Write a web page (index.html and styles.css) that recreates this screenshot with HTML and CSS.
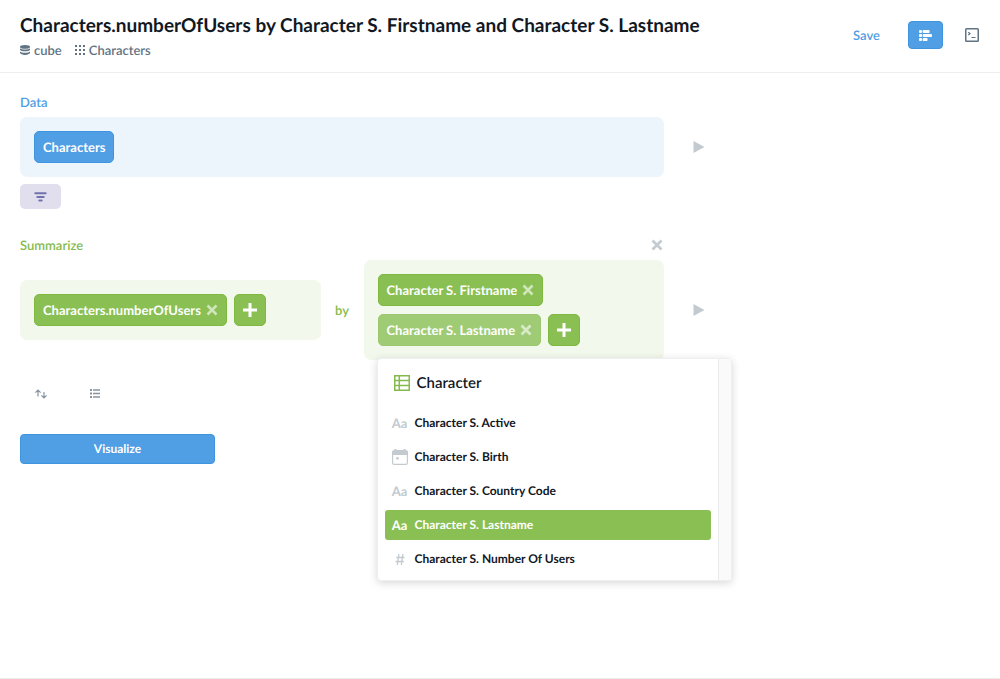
FILE: index.html
```html
<!DOCTYPE html>
<html lang="en">
<head>
<meta charset="utf-8">
<title>Characters.numberOfUsers</title>
<link rel="stylesheet" href="styles.css">
</head>
<body>
<svg class="sprite" aria-hidden="true">
  <symbol id="close" viewBox="0 0 12 12"><path d="M1.5 1.5l9 9M10.5 1.5l-9 9" stroke="currentColor" stroke-width="2.6" fill="none"/></symbol>
  <symbol id="plus" viewBox="0 0 14 14"><path d="M7 0v14M0 7h14" stroke="currentColor" stroke-width="3" fill="none"/></symbol>
  <symbol id="play" viewBox="0 0 12 12"><path d="M.5 0v12L11.5 6z" fill="currentColor"/></symbol>
</svg>
<header class="header">
  <div class="heading">
    <h1 class="title">Characters.numberOfUsers by Character S. Firstname and Character S. Lastname</h1>
    <nav class="crumbs">
      <a class="crumb" href="#cube">
        <svg width="10" height="10" viewBox="0 0 10 10" fill="currentColor"><ellipse cx="5" cy="1.9" rx="5" ry="1.8"/><path d="M0 3.2c1 1.7 9 1.7 10 0v1.6c-1 2-9 2-10 0z"/><path d="M0 6.4c1 1.9 9 1.9 10 0v1.7c-1 2.4-9 2.4-10 0z"/></svg>
        <span>cube</span>
      </a>
      <a class="crumb" href="#characters">
        <svg width="10" height="10" viewBox="0 0 10 10" fill="currentColor"><path d="M0 0h2v2H0zM4 0h2v2H4zM8 0h2v2H8zM0 4h2v2H0zM4 4h2v2H4zM8 4h2v2H8zM0 8h2v2H0zM4 8h2v2H4zM8 8h2v2H8z"/></svg>
        <span>Characters</span>
      </a>
    </nav>
  </div>
  <div class="actions">
    <button class="save" type="button">Save</button>
    <button class="mode mode-active" type="button" aria-label="Notebook editor">
      <svg width="13" height="11" viewBox="0 0 13 11" fill="currentColor"><rect width="3" height="3" rx="1"/><rect y="4" width="3" height="3" rx="1"/><rect y="8" width="3" height="3" rx="1"/><rect x="3.6" width="7" height="3" rx="1"/><rect x="3.6" y="4" width="9.4" height="3" rx="1"/><rect x="3.6" y="8" width="5" height="3" rx="1"/></svg>
    </button>
    <button class="mode" type="button" aria-label="View SQL">
      <svg width="14" height="14" viewBox="0 0 14 14" fill="none" stroke="currentColor"><rect x=".75" y=".75" width="12.5" height="12.5" rx=".8" stroke-width="1.5"/><path d="M3.3 4.2L5 5.6 3.3 7M6.5 9.5h4" stroke-width="1.2"/></svg>
    </button>
  </div>
</header>
<main class="notebook">
  <section class="step">
    <h2 class="label blue">Data</h2>
    <div class="line">
      <div class="cell cell-blue"><button class="chip chip-blue" type="button">Characters</button></div>
      <button class="play" type="button" aria-label="Preview data"><svg width="12" height="12"><use href="#play"/></svg></button>
    </div>
    <button class="filter" type="button" aria-label="Filter">
      <svg width="13" height="10" viewBox="0 0 13 10" fill="none" stroke="currentColor" stroke-width="2" stroke-linecap="round"><path d="M1.3 1.2h10.4M3.3 5h6.4M5.3 8.6h2.4" /></svg>
    </button>
  </section>
  <section class="step">
    <div class="step-head">
      <h2 class="label green">Summarize</h2>
      <button class="remove-step" type="button" aria-label="Remove step"><svg width="12" height="12"><use href="#close"/></svg></button>
    </div>
    <div class="line">
      <div class="summary">
        <div class="cell cell-green">
          <button class="chip" type="button">Characters.numberOfUsers <svg class="x" width="12" height="12"><use href="#close"/></svg></button>
          <button class="chip add" type="button" aria-label="Add metric"><svg width="14" height="14"><use href="#plus"/></svg></button>
        </div>
        <span class="by green">by</span>
        <div class="group">
          <div class="cell cell-green">
            <button class="chip" type="button">Character S. Firstname <svg class="x" width="12" height="12"><use href="#close"/></svg></button>
            <button class="chip chip-open" type="button">Character S. Lastname <svg class="x" width="12" height="12"><use href="#close"/></svg></button>
            <button class="chip add" type="button" aria-label="Add grouping"><svg width="14" height="14"><use href="#plus"/></svg></button>
          </div>
          <div class="menu">
            <div class="menu-main">
              <h3 class="menu-title">
                <svg width="16" height="16" viewBox="0 0 16 16" fill="none" stroke="#84bb4c" stroke-width="1.5"><path d="M.75.75h14.5v14.5H.75zM5.3.7v14.6M.7 5.5h14.6M.7 10.4h14.6"/></svg>
                Character
              </h3>
              <ul class="options">
                <li><button class="option" type="button"><span class="kind">Aa</span>Character S. Active</button></li>
                <li><button class="option" type="button"><span class="kind"><svg width="16" height="16" viewBox="0 0 16 16"><path d="M3.4 0v2M12.6 0v2" stroke="currentColor" stroke-width="2"/><rect x=".6" y="1.6" width="14.8" height="13.8" rx="1.6" fill="none" stroke="currentColor" stroke-width="1.2"/><path d="M.6 2h14.8v4H.6z" fill="currentColor"/><circle cx="5.5" cy="9.3" r="1.4" fill="currentColor"/></svg></span>Character S. Birth</button></li>
                <li><button class="option" type="button"><span class="kind">Aa</span>Character S. Country Code</button></li>
                <li><button class="option option-selected" type="button"><span class="kind">Aa</span>Character S. Lastname</button></li>
                <li><button class="option" type="button"><span class="kind"><svg width="10" height="11" viewBox="0 0 10 11" fill="none" stroke="currentColor" stroke-width="1.3"><path d="M3.9.2L2.3 10.8M7.9.2L6.3 10.8M1.3 3.5h8.2M.6 7.5h8.2"/></svg></span>Character S. Number Of Users</button></li>
              </ul>
            </div>
            <div class="menu-rail"></div>
          </div>
        </div>
      </div>
      <button class="play" type="button" aria-label="Preview summary"><svg width="12" height="12"><use href="#play"/></svg></button>
    </div>
  </section>
  <div class="extras">
    <button class="extra" type="button" aria-label="Sort"><svg width="12" height="10" viewBox="0 0 12 10" fill="none" stroke="currentColor" stroke-width="1.2"><path d="M3 7.5V1M.4 3.6L3 1l2.6 2.6M9 3v6M6.4 6.4L9 9l2.6-2.6"/></svg></button>
    <button class="extra" type="button" aria-label="Row limit"><svg width="10" height="9" viewBox="0 0 10 9" fill="currentColor"><path d="M0 0h2v2H0zM3 .3h7v1.4H3zM0 3.5h2v2H0zM3 3.8h7v1.4H3zM0 7h2v2H0zM3 7.3h7v1.4H3z"/></svg></button>
  </div>
  <button class="visualize" type="button">Visualize</button>
</main>
</body>
</html>
```

FILE: styles.css
```css
* { box-sizing: border-box; }
body {
  margin: 0;
  min-height: 100vh;
  display: flex;
  flex-direction: column;
  border-bottom: 1px solid #eeeeef;
  background: #fff;
  color: #11181f;
  font: 600 13px/16px Lato, sans-serif;
  text-rendering: geometricPrecision;
}
button {
  display: inline-flex;
  align-items: center;
  justify-content: center;
  margin: 0;
  padding: 0;
  border: 0;
  background: none;
  color: inherit;
  font: inherit;
  text-rendering: inherit;
  cursor: pointer;
}
svg { display: block; flex: none; }
h1, h2, h3, ul { margin: 0; padding: 0; font: inherit; }
.sprite { position: absolute; width: 0; height: 0; }
.blue { color: #509ee3; }
.green { color: #84bb4c; }

.header {
  display: flex;
  justify-content: space-between;
  align-items: flex-start;
  padding: 14px 21px 14px 20px;
  border-bottom: 1px solid #eeeeef;
}
.title { font-size: 19px; font-weight: 700; line-height: 24px; }
.crumbs { display: flex; gap: 13px; margin-top: 4px; }
.crumb {
  display: flex;
  align-items: center;
  gap: 4px;
  color: #5f7383;
  text-decoration: none;
}
.actions { display: flex; align-items: center; gap: 22px; padding-top: 7px; }
.save { margin-right: 6px; color: #509ee3; }
.mode { height: 28px; color: #5f7383; }
.mode-active {
  width: 35px;
  border: 1px solid #3f94df;
  border-radius: 4px;
  background: #509ee3;
  color: #fff;
}

.notebook { padding: 20px; }
.step + .step { margin-top: 27px; }
.label { line-height: 18px; }
.step-head {
  display: flex;
  justify-content: space-between;
  max-width: 643px;
}
.remove-step { color: #c3cad0; }
.line { display: flex; align-items: center; gap: 28px; margin-top: 6px; }
.line > .cell, .summary { flex: 1; max-width: 644px; }
.play { width: 14px; height: 24px; color: #c3cad0; }
.cell {
  display: flex;
  flex-wrap: wrap;
  gap: 8px 7px;
  padding: 14px;
  border-radius: 7px;
}
.cell-blue { background: #edf5fc; }
.cell-green { background: #f3f8ed; }
.chip {
  gap: 5px;
  height: 32px;
  padding: 0 8px;
  border: 1px solid #7fb93f;
  border-radius: 5px;
  background: #89bf53;
  color: #fff;
  font-weight: 700;
}
.chip-blue { border-color: #3f94df; background: #509ee3; }
.chip-open { border-color: #9bc870; background: #a0cb75; }
.add { width: 32px; padding: 0; }
.x { opacity: .6; }
.filter {
  width: 41px;
  height: 25px;
  margin-top: 7px;
  border-radius: 5px;
  background: #e1dfed;
  color: #7172ad;
}
.summary {
  display: grid;
  grid-template-columns: 1fr 43px 1fr;
  align-items: center;
}
.by { text-align: center; }
.group { position: relative; }
.menu {
  position: absolute;
  top: calc(100% - 2px);
  left: 13px;
  display: flex;
  width: 355px;
  border: 1px solid #eeeff0;
  border-radius: 4px;
  background: #fff;
  box-shadow: 0 2px 8px rgba(0, 0, 0, .16);
}
.menu-main { flex: 1; padding: 15px 7px 6px; }
.menu-rail { width: 13px; border-left: 1px solid #eaebec; background: #fafafa; }
.menu-title {
  display: flex;
  align-items: center;
  gap: 7px;
  padding-left: 9px;
  font-size: 15px;
  line-height: 18px;
}
.options {
  display: grid;
  gap: 4px;
  margin-top: 16px;
  list-style: none;
}
.option {
  justify-content: flex-start;
  gap: 7px;
  width: 100%;
  height: 30px;
  padding-left: 7px;
  border-radius: 3px;
  font-size: 12px;
  font-weight: 700;
}
.kind { display: flex; justify-content: center; width: 16px; color: #c3cad0; font-size: 13px; }
.option-selected { background: #89bf53; color: #fff; }
.option-selected .kind { color: #fff; }

.extras { display: flex; gap: 13px; margin-top: 21px; }
.extra { width: 41px; height: 25px; color: #8795a1; }
.visualize {
  width: 195px;
  height: 30px;
  margin-top: 28px;
  border: 1px solid #3f94df;
  border-radius: 4px;
  background: #509ee3;
  color: #fff;
  font-size: 12px;
  font-weight: 700;
}
```
